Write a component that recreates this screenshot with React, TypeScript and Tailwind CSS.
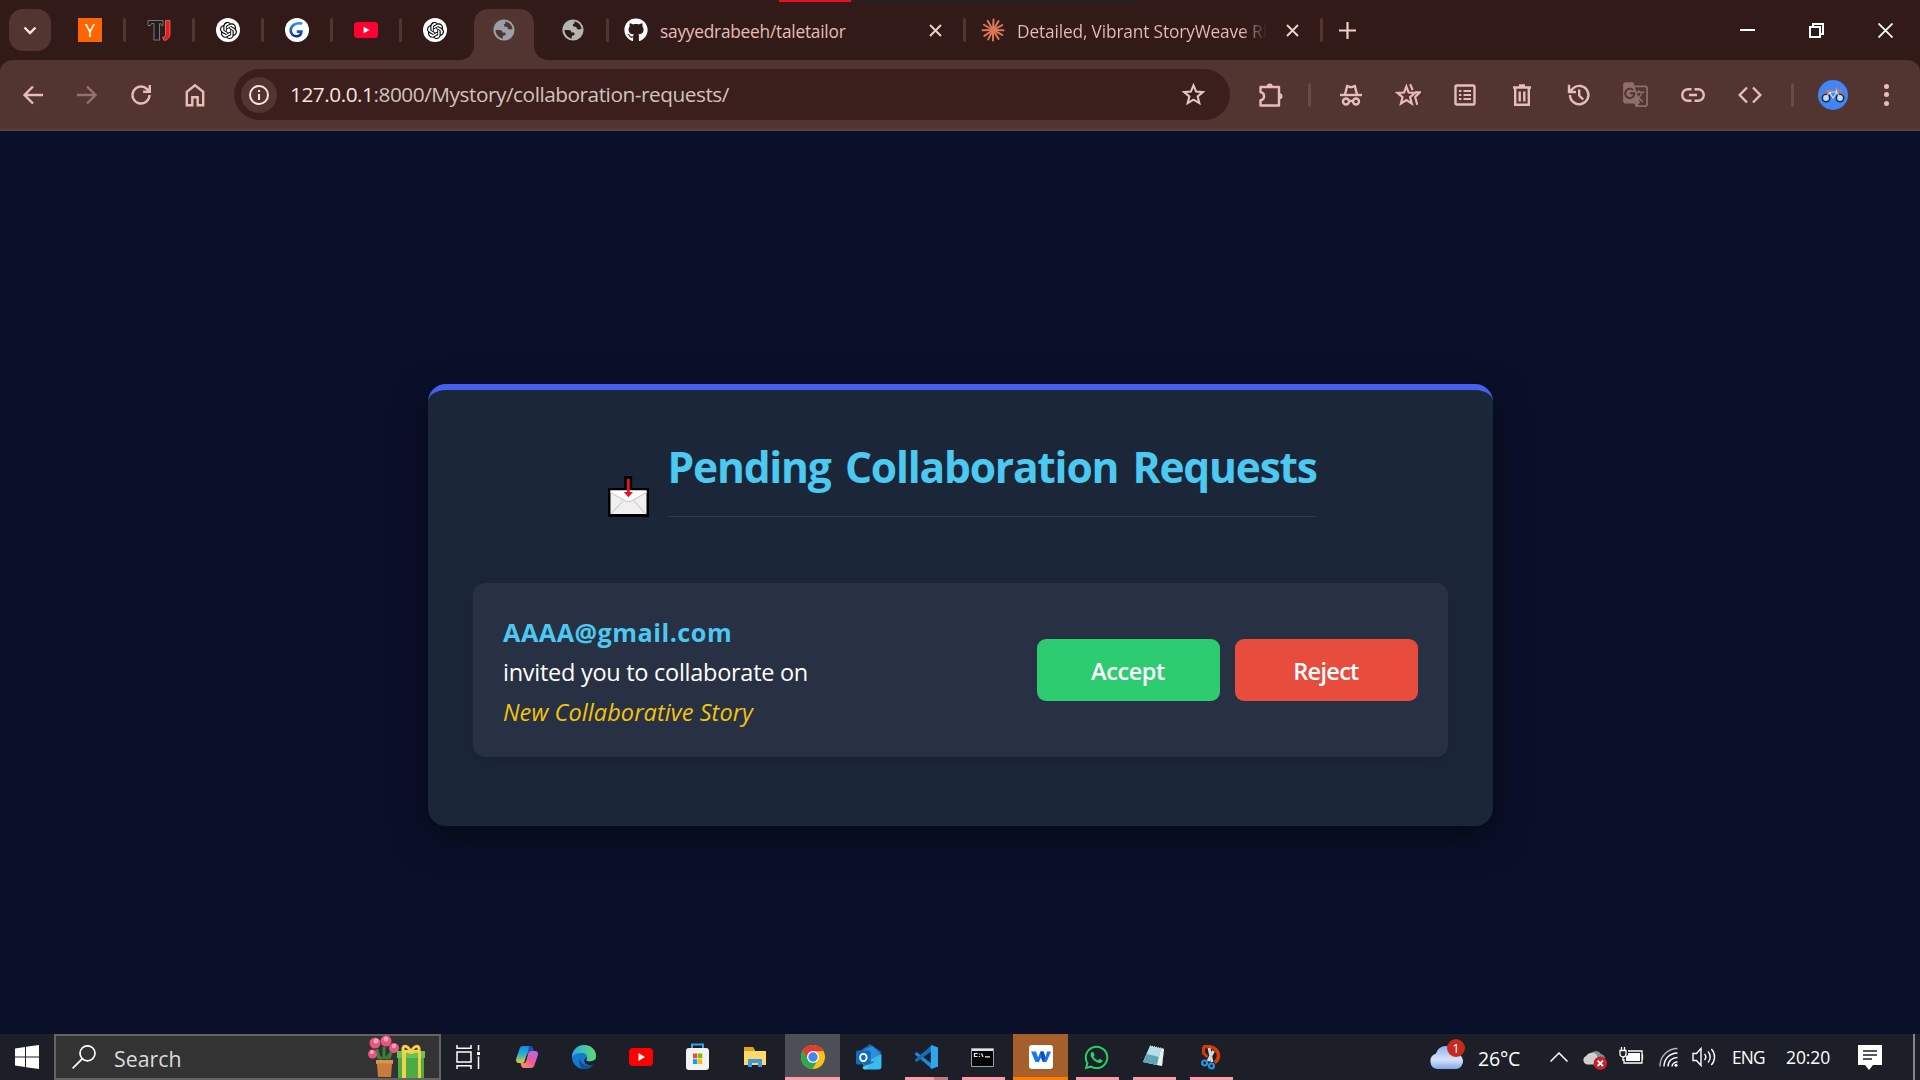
import React from 'react';
import { FaGithub, FaWhatsapp } from 'react-icons/fa';
import { SiOpenai } from 'react-icons/si';
import { MdGTranslate } from 'react-icons/md';

type Kids = { children?: React.ReactNode };

/* ---------- tab strip ---------- */

function Globe({ color, back }: { color: string; back: string }) {
  return (
    <svg width="22" height="22" viewBox="0 0 22 22">
      <circle cx="11" cy="11" r="10.6" fill={color} />
      <path
        fill={back}
        d="M12.2 2.6C16 3 19 6 19.5 9.6c-1.500 1.200-3.400.8-4.200.4-.9-.5-.3-1.800-1.500-2.200-1.600-.4-2.800-.2-3-1.600-.1-1.300 1.500-1.400 1.800-2.200zM2.500 10.900h3.700c2.600 0 3.200 1.300 3.300 2.700h2.200c1.200.2 1.300 2.900-.2 3-.9.200-1.700.1-1.700 1.100v1.700C6 18.800 2.700 15.500 2.500 10.900z"
      />
    </svg>
  );
}

function OpenAiIcon() {
  return (
    <span className="flex h-6 w-6 items-center justify-center rounded-full bg-white text-black">
      <SiOpenai size={17} />
    </span>
  );
}

function YoutubeIcon() {
  return (
    <svg width="24" height="16" viewBox="0 0 24 16">
      <rect width="24" height="16" rx="3.500" fill="#ff0033" />
      <path d="M9.600 4.800 15.600 8l-6 3.200z" fill="#fff" />
    </svg>
  );
}

function TjIcon() {
  return (
    <svg width="24" height="24" viewBox="0 0 24 24">
      <path d="M1 2.500h15v5h-1.500l-1-2h-1v15.500l.5 1H6.500l.5-1V5.500H4.500l-1 2H1z" fill="#1d1d1f" stroke="#858080" strokeWidth=".9" />
      <path d="M18.500 2.500h4.500V16c0 3.500-2.500 6-6 6.500l-.8-1.500-.5-2h1c1 0 1.800-1 1.800-2.500z" fill="#f01818" stroke="#d9a0a0" strokeWidth=".6" />
    </svg>
  );
}

function GIcon() {
  return (
    <svg width="24" height="24" viewBox="0 0 24 24">
      <defs>
        <linearGradient id="gblue" x1="0" y1="0" x2="0" y2="1">
          <stop offset="0" stopColor="#2f8df0" />
          <stop offset="1" stopColor="#0a2fa0" />
        </linearGradient>
      </defs>
      <circle cx="12" cy="12" r="12" fill="#fff" />
      <path d="M17.200 5.600C11 4 5.700 7.500 5.700 12.200c0 3.800 2.800 6 5.800 6 3 0 4.700-1.800 4.900-4.600h-4.600" fill="none" stroke="url(#gblue)" strokeWidth="2.600" />
    </svg>
  );
}

function ClaudeIcon() {
  const rays = [3, 32, 62, 92, 118, 148, 180, 207, 236, 268, 300, 330];
  return (
    <svg width="24" height="24" viewBox="0 0 24 24" stroke="#d97757" strokeWidth="2" strokeLinecap="round">
      {rays.map((a) => (
        <path key={a} d="M12 12V1.500" transform={`rotate(${a} 12 12)`} />
      ))}
    </svg>
  );
}

function Sep({ hidden }: { hidden?: boolean }) {
  return <span className={hidden ? 'h-6 w-[3px]' : 'h-6 w-[3px] rounded-full bg-[#523431]'} />;
}

function PinnedTab({ children, hidden }: Kids & { hidden?: boolean }) {
  return (
    <div className="flex h-full w-[69px] items-center">
      <span className="flex w-[66px] justify-center">{children}</span>
      <Sep hidden={hidden} />
    </div>
  );
}

function CloseX() {
  return (
    <svg width="13" height="13" viewBox="0 0 13 13" stroke="#f0cfc9" strokeWidth="2" fill="none">
      <path d="M1 1 12 12M12 1 1 12" />
    </svg>
  );
}

function TabStrip() {
  return (
    <div className="relative flex h-[60px] items-center bg-[#311a17]">
      <div className="absolute top-0 left-[779px] flex h-[2px] w-[362px] bg-[#262022]">
        <span className="h-full w-[72px] bg-[#e81123]" />
      </div>
      <button className="ml-[9px] flex h-[42px] w-[42px] items-center justify-center rounded-[14px] bg-[#523431]">
        <svg width="14" height="9" viewBox="0 0 14 9" fill="none" stroke="#fbe4df" strokeWidth="2.400">
          <path d="M1.500 1.500 7 7l5.500-5.500" />
        </svg>
      </button>
      <div className="ml-[6px] flex h-full">
        <PinnedTab>
          <span className="flex h-6 w-6 items-center justify-center bg-[#ff6600] text-[18px] leading-none text-white">Y</span>
        </PinnedTab>
        <PinnedTab><TjIcon /></PinnedTab>
        <PinnedTab><OpenAiIcon /></PinnedTab>
        <PinnedTab><GIcon /></PinnedTab>
        <PinnedTab><YoutubeIcon /></PinnedTab>
        <PinnedTab hidden><OpenAiIcon /></PinnedTab>
        <div className="relative flex h-full w-[69px] items-center">
          <svg className="absolute bottom-0 left-[-12px]" width="90" height="51" viewBox="0 0 90 51" fill="#523431">
            <path d="M0 51c9 0 15-6 15-15V15C15 6 21 0 30 0h30c9 0 15 6 15 15v21c0 9 6 15 15 15z" />
          </svg>
          <span className="relative flex w-[66px] justify-center"><Globe color="#9aa0a6" back="#523431" /></span>
        </div>
        <PinnedTab><Globe color="#b4b4b2" back="#311a17" /></PinnedTab>
      </div>
      <div className="flex h-full w-[357px] items-center pl-[15px] text-[17.300px] text-[#e7bdb6]">
        <FaGithub size={24} color="#fff" />
        <span className="ml-3 w-[269px] pt-[3px] tracking-[-0.23px]">sayyedrabeeh/taletailor</span>
        <CloseX />
        <span className="grow" />
        <Sep />
      </div>
      <div className="flex h-full w-[357px] items-center pl-[15px] text-[17.300px] text-[#e7bdb6]">
        <ClaudeIcon />
        <span className="mr-[19px] ml-3 w-[250px] overflow-hidden bg-gradient-to-r from-[#e7bdb6] from-90% to-[#e7bdb6]/0 bg-clip-text pt-[3px] tracking-[-0.14px] whitespace-nowrap text-transparent">
          Detailed, Vibrant StoryWeave RE
        </span>
        <CloseX />
        <span className="grow" />
        <Sep />
      </div>
      <svg className="ml-4" width="17" height="17" viewBox="0 0 17 17" stroke="#f0cfc9" strokeWidth="2.200">
        <path d="M8.500 0v17M0 8.500h17" />
      </svg>
      <div className="ml-auto flex h-full text-white">
        <span className="flex w-[69px] items-center justify-center"><span className="h-[2px] w-[15px] bg-white" /></span>
        <span className="flex w-[69px] items-center justify-center">
          <svg width="15" height="15" viewBox="0 0 15 15" fill="none" stroke="#fff" strokeWidth="2">
            <path d="M1 4h10v10H1zM4 4V1h10v10h-3" />
          </svg>
        </span>
        <span className="flex w-[69px] items-center justify-center">
          <svg width="15" height="15" viewBox="0 0 15 15" stroke="#fff" strokeWidth="1.800">
            <path d="m.5.5 14 14M14.500.5l-14 14" />
          </svg>
        </span>
      </div>
    </div>
  );
}

/* ---------- toolbar ---------- */

function Line({ d, size = 24, fade, children }: { d?: string; size?: number; fade?: boolean } & Kids) {
  return (
    <svg
      className={fade ? 'opacity-45' : ''}
      width={size}
      height={size}
      viewBox="0 0 24 24"
      fill="none"
      stroke="#e7bdb6"
      strokeWidth="2.400"
    >
      {d && <path d={d} />}
      {children}
    </svg>
  );
}

const slot = 'flex h-full w-[54px] items-center justify-center';
const ext = 'flex h-full w-[57px] items-center justify-center';

function Bike() {
  return (
    <svg width="30" height="30" viewBox="0 0 30 30">
      <circle cx="15" cy="15" r="15" fill="#4285f4" />
      <g fill="#b9dcff" stroke="#1d2b3f" strokeWidth="1.600">
        <circle cx="8" cy="18" r="3.700" />
        <circle cx="22" cy="18" r="3.700" />
      </g>
      <path d="m8 18 3.500-6h7.500l3 6M11.500 12l3.500 6 4-6-1-2.500" fill="none" stroke="#d5dce4" strokeWidth="1.200" />
      <path d="M8.500 10.800h4.500M17 8.500h2.500M20.500 10.800h3" stroke="#f4703a" strokeWidth="1.800" />
      <path d="M4 15.500a4.600 4.600 0 0 1 6.500-1.600M19.500 13.900a4.600 4.600 0 0 1 6.500 1.600" fill="none" stroke="#d9603a" strokeWidth="1" />
    </svg>
  );
}

function Toolbar() {
  return (
    <div className="bg-[#311a17]">
      <div className="flex h-[71px] items-center rounded-t-[12px] border-b-2 border-[#5b3f3a] bg-[#523431] pl-[6px]">
        <span className={slot}><Line d="M22 12H4M12 3.500 3.500 12l8.500 8.500" /></span>
        <span className={slot}><Line fade d="M2 12h18M12 3.500l8.500 8.500-8.500 8.500" /></span>
        <span className={slot}><Line d="M20.500 12a8.500 8.500 0 1 1-2.600-6.100L20.500 8.500M20.800 2v6.700h-6.700" /></span>
        <span className={slot}><Line d="M3.800 22.300V8.800L12 2.200l8.200 6.600v13.500h-5.500v-8H9.300v8z" /></span>
        <div className="ml-3 flex h-[51px] w-[996px] items-center rounded-full bg-[#3a1f1c] pr-[24px] pl-[7px]">
          <span className="flex h-9 w-9 items-center justify-center rounded-full bg-[#523431]">
            <svg width="20" height="20" viewBox="0 0 20 20" fill="none" stroke="#fbe4df" strokeWidth="2">
              <circle cx="10" cy="10" r="9" />
              <path d="M10 9v6M10 5v2" />
            </svg>
          </span>
          <span className="ml-[13px] text-[20.800px] tracking-[-0.47px] text-[#d3c2bf]">
            <span className="text-[#f7e4e0]">127.0.0.1</span>:8000/Mystory/collaboration-requests/
          </span>
          <svg className="ml-auto" width="25" height="25" viewBox="0 0 24 24" fill="none" stroke="#dccac6" strokeWidth="2">
            <path d="m12 3.200 2.500 6 6.500.5-5 4.200 1.600 6.400L12 16.900l-5.600 3.400L8 13.900 3 9.700l6.500-.5z" />
          </svg>
        </div>
        <span className="ml-[14px] flex w-[54px] justify-center">
          <svg width="26" height="26" viewBox="0 0 26 26" fill="none" stroke="#e7bdb6" strokeWidth="2.400" strokeLinejoin="round">
            <path d="M2.500 5H21v18.500H2.500v-5.200c4.800-.8 4.800-7.400 0-8.200z" />
            <path d="M8.700 4.500a3 3 0 0 1 6 0zM21.500 11.300a3 3 0 0 1 0 6z" fill="#e7bdb6" stroke="none" />
          </svg>
        </span>
        <span className="ml-[10px] h-6 w-[3px] rounded-full bg-[#6e4a46]" />
        <div className="ml-[11px] flex h-full">
          <span className={ext}>
            <Line>
              <path d="M1 12h22" />
              <path d="M6 11.500 8.200 3l3.800 1.300L15.800 3 18 11.500" />
              <circle cx="7" cy="18.500" r="3" />
              <circle cx="17" cy="18.500" r="3" />
              <path d="M9.800 18h4.400" />
            </Line>
          </span>
          <span className={ext}>
            <Line size={26}>
              <path strokeWidth="2" d="m10.500 4.200 2.100 5.500 5.900.4-4.600 3.800 1.600 6-5-3.300-5 3.300 1.500-6L2.400 10.100l6-.4zM14 2l2.300 5.500M18.500 9.500H23l-4.400 4.300L20.500 21" />
            </Line>
          </span>
          <span className={ext}>
            <Line>
              <rect x="2.500" y="2.500" width="19" height="19" rx="1.500" />
              <path d="M6 8h2.400M6 12h2.400M6 16h2.400M10.500 8H18M10.500 12H18M10.500 16H18" strokeWidth="2" />
            </Line>
          </span>
          <span className={ext}>
            <Line d="M3 4.500h18M9 2.500h6M5.200 5v16.800h13.600V5M9.700 8.500v10M14.300 8.500v10" />
          </span>
          <span className={ext}>
            <Line d="M3 12a9.200 9.200 0 1 0 3-6.700L2.500 8.700M2 1.800v7.200h7M12.200 6.500v6l4 4" />
          </span>
          <span className={`${ext} text-[#8f6e6a]`}><MdGTranslate size={27} /></span>
          <span className={ext}>
            <Line d="M10.500 6.200H7a5.800 5.800 0 0 0 0 11.600h3.500M13.500 6.200H17a5.800 5.800 0 0 1 0 11.600h-3.500M8 12h8" />
          </span>
          <span className={ext}><Line d="m9 4.500-7.300 7.500L9 19.500M15 4.500l7.300 7.500-7.300 7.500" /></span>
        </div>
        <span className="ml-[13px] h-6 w-[3px] rounded-full bg-[#6e4a46]" />
        <span className="ml-[24px]"><Bike /></span>
        <span className="ml-[36px] flex h-[22px] flex-col justify-between">
          <i className="h-[5px] w-[5px] rounded-full bg-[#e7bdb6]" />
          <i className="h-[5px] w-[5px] rounded-full bg-[#e7bdb6]" />
          <i className="h-[5px] w-[5px] rounded-full bg-[#e7bdb6]" />
        </span>
      </div>
    </div>
  );
}

/* ---------- page ---------- */

function Envelope() {
  return (
    <svg width="41" height="41" viewBox="0 0 41 41">
      <path d="M16.200 0h8v12H41v29H0V12h16.200z" fill="#000" />
      <path d="M2.500 14.500h36V38h-36z" fill="#f0f0f0" />
      <path d="M2.500 14.500h36v2L20.500 26 2.500 16.500z" fill="#fff" />
      <path d="m2.500 16.500 15 8.500q3 1.600 6 0l15-8.500M3 38l12-13M38 38 26 25" fill="none" stroke="#ccc" strokeWidth="1.100" />
      <path d="M19 3h2.800v13H25l-4.600 5.200-4.600-5.200H19z" fill="#e81224" />
    </svg>
  );
}

function RequestsPage() {
  return (
    <main className="flex grow items-start bg-[#0a102a] pt-[253px]">
      <section className="ml-[428px] h-[442px] w-[1065px] rounded-[18px] border-t-[6px] border-[#4361ee] bg-[#1b2739] px-[45px] shadow-[0_12px_36px_rgba(0,0,0,0.5)]">
        <div className="flex items-end justify-center pt-[44px] pl-[2px]">
          <span className="mr-[19px]"><Envelope /></span>
          <h1 className="h-[83px] w-[648px] border-b border-[#303b4b] text-[42.500px] leading-[65px] font-bold tracking-[-1.2px] [word-spacing:4.500px] whitespace-nowrap text-[#4cc9f0]">
            Pending Collaboration Requests
          </h1>
        </div>
        <article className="mt-[66px] flex h-[174px] items-center justify-between rounded-[12px] bg-[#283043] px-[30px] shadow-[0_6px_18px_rgba(0,0,0,0.15)]">
          <div className="flex flex-col pt-[4px] text-[23.500px] leading-[40px] text-white">
            <strong className="text-[25.200px] tracking-[0.5px] text-[#4cc9f0]">AAAA@gmail.com</strong>
            <span className="tracking-[-0.27px]">invited you to collaborate on</span>
            <em className="tracking-[0.09px] text-[#f1c40f]">New Collaborative Story</em>
          </div>
          <div className="flex gap-[15px] text-[23.500px] font-semibold text-white">
            <button className="h-[62px] w-[183px] rounded-[9px] bg-[#2ecc71] pt-[3px] pr-[1px] tracking-[-0.4px]">Accept</button>
            <button className="h-[62px] w-[183px] rounded-[9px] bg-[#e74c3c] pt-[3px] pr-[1px] tracking-[-0.7px]">Reject</button>
          </div>
        </article>
      </section>
    </main>
  );
}

/* ---------- taskbar ---------- */

function Gifts() {
  return (
    <svg width="57" height="44" viewBox="0 0 57 44">
      <path d="M16 24V12M14 24 6 18M18 24l8-10M11 24 9 14M21 24l2-6" stroke="#3f7d3a" strokeWidth="3" />
      <g fill="#e8557f">
        <circle cx="7" cy="8" r="5.500" /><circle cx="18" cy="6" r="5.500" /><circle cx="26" cy="13" r="5" /><circle cx="4.500" cy="19" r="4.500" />
      </g>
      <g fill="#f8a3b8">
        <circle cx="8" cy="6" r="2.500" /><circle cx="18" cy="4" r="2.500" /><circle cx="26" cy="11" r="2.200" /><circle cx="4" cy="17" r="2" />
      </g>
      <path d="M8 25h17v4h-1l-1 13H10L9 29H8z" fill="#c97b3c" />
      <path d="M8 25h17v3.500H8z" fill="#dd9452" />
      <path d="M30 19h26v24H30z" fill="#4bab45" />
      <path d="M29 16h28v7H29z" fill="#66c255" />
      <path d="M34 16h4v27h-4zM50 16h3v27h-3z" fill="#f3cf4b" />
      <path d="M43 17c-4-8-9-7-8-1zM43 17c4-8 9-7 8-1z" fill="none" stroke="#f6d24a" strokeWidth="3" />
    </svg>
  );
}

function App24({ children, size = 24 }: Kids & { size?: number }) {
  return <svg width={size} height={size} viewBox="0 0 24 24">{children}</svg>;
}

function Task({ children, mark }: Kids & { mark?: 'on' | 'vs' | 'chrome' | 'orange' }) {
  const tile =
    mark === 'chrome'
      ? 'relative ml-[2px] flex h-full w-[55px] items-center justify-center bg-[#4c4f56]'
      : mark === 'orange'
        ? 'relative ml-[2px] flex h-full w-[55px] items-center justify-center bg-[#a55f2b]'
        : 'relative flex h-full w-[57px] items-center justify-center';
  return (
    <div className={tile}>
      {children}
      {mark === 'on' && <span className="absolute bottom-0 left-[8px] h-[3px] w-[43px] bg-[#ff9aa6]" />}
      {mark === 'vs' && (
        <span className="absolute bottom-0 left-[8px] flex h-[3px] w-[43px] bg-[#c27982]"><i className="w-[29px] bg-[#ff9aa6]" /></span>
      )}
      {mark === 'chrome' && <span className="absolute bottom-0 h-[3px] w-full bg-[#ff9aa6]" />}
      {mark === 'orange' && <span className="absolute bottom-0 h-[3px] w-full bg-[#ff7a00]" />}
    </div>
  );
}

function Taskbar() {
  return (
    <footer className="flex h-[46px] items-center bg-[#1c1f28] text-white">
      <span className="flex w-[54px] justify-center">
        <svg width="24" height="24" viewBox="0 0 24 24" fill="#fff">
          <path d="M0 3.400 10 2v9.500H0zM11 1.800 24 0v11.500H11zM0 12.500h10V22L0 20.600zM11 12.500h13V24l-13-1.800z" />
        </svg>
      </span>
      <div className="flex h-full w-[387px] items-center border-2 border-[#646464] bg-[#333333] pr-[14px] pl-4">
        <svg width="24" height="24" viewBox="0 0 24 24" fill="none" stroke="#fff" strokeWidth="1.700">
          <circle cx="15.500" cy="8.300" r="7.500" />
          <path d="M10.200 13.800.6 23.400" />
        </svg>
        <span className="ml-[18px] pt-[4px] text-[21.300px] text-[#dcdcdc]">Search</span>
        <span className="ml-auto"><Gifts /></span>
      </div>
      <Task>
        <svg className="mr-[3px]" width="25" height="24" viewBox="0 0 25 24" fill="none" stroke="#fff" strokeWidth="1.500">
          <path d="M1 0v3.300h14V0M1 7h14v10H1zM1 24v-3.300h14V24M22.500 0v5.500M22.500 11.500V24" />
          <path d="M21 7h3v3h-3z" fill="#fff" stroke="none" />
        </svg>
      </Task>
      <Task>
        <App24>
          <defs>
            <linearGradient id="cpa" x1="0" y1="0" x2="0" y2="1"><stop offset="0" stopColor="#1a86e8" /><stop offset=".5" stopColor="#29b3c9" /><stop offset="1" stopColor="#e8c92e" /></linearGradient>
            <linearGradient id="cpb" x1="1" y1="0" x2="0" y2="1"><stop offset="0" stopColor="#a66bf5" /><stop offset=".5" stopColor="#ee5a9a" /><stop offset="1" stopColor="#ff9b50" /></linearGradient>
          </defs>
          <path d="M8 1h7c2 0 2.500 1.500 3 3l.6 2h-3c-2 0-2.800 1-3.300 3l-1.500 6c-.6 2-1.500 3-3.500 3H4c-2.500 0-3.500-2-2.800-4.500L4.500 4C5 2 6 1 8 1z" fill="url(#cpa)" />
          <path d="M16 23H9c-2 0-2.500-1.500-3-3l-.4-2h2.500c2 0 2.800-1 3.300-3l1.500-6c.6-2 1.500-3 3.500-3H20c2.500 0 3.500 2 2.800 4.500L19.500 20c-.5 2-1.500 3-3.500 3z" fill="url(#cpb)" />
          <path d="M8 18c2 0 2.800-1 3.300-3l1.500-6-1.600 2-1.500 5c-.4 1.300-1 2-2 2z" fill="#1c1f28" />
          <path d="M14 1h1c2 0 2.500 1.500 3 3l.6 2h-3c-1 0-2 .4-2.500 1z" fill="#1a4fc4" />
        </App24>
      </Task>
      <Task>
        <App24>
          <defs>
            <linearGradient id="eda" x1="0" y1="0" x2="1" y2="0"><stop offset="0" stopColor="#2ba8e8" /><stop offset="1" stopColor="#5fdc6a" /></linearGradient>
          </defs>
          <circle cx="12" cy="12" r="12" fill="#1479d0" />
          <path d="M0 11C1 4.500 6 0 12 0c7 0 12 5 12 10.500 0 4-3 6-6.500 6-3 0-3.800-1.500-3-2.500 1.500-2 .5-6-4-6C6 8 2 8.500 0 13z" fill="url(#eda)" />
          <path d="M8 13c0 6 6 9 13.500 6.500C19 23 15 24.500 11 24 7 22 6.500 16 8 13z" fill="#114f96" />
          <path d="M14.500 14c-.8 1 0 2.500 3 2.500 2.500 0 4.500-.9 5.700-2.200l2 3.200-3.800 2.200c-5 1.700-10.500-1.300-8.700-5.200 1.200-2.500 3.300-2.500 1.800-.5z" fill="#1c1f28" />
        </App24>
      </Task>
      <Task>
        <svg width="24" height="20" viewBox="0 0 24 20"><rect y="1" width="24" height="18" rx="4" fill="#f00" /><path d="m9.500 6 6.500 4-6.500 4z" fill="#fff" /></svg>
      </Task>
      <Task>
        <svg width="23" height="28" viewBox="0 0 23 28">
          <path d="M6 7V1.500h11V7" fill="none" stroke="#31a8e8" strokeWidth="2" />
          <rect y="5" width="23" height="22" rx="3" fill="#f2f2f2" />
          <path d="M7 10.500h4.300v4.800H7z" fill="#f25022" /><path d="M12 10.500h4.300v4.800H12z" fill="#7fba00" />
          <path d="M7 16.200h4.300V21H7z" fill="#00a4ef" /><path d="M12 16.200h4.300V21H12z" fill="#ffb900" />
        </svg>
      </Task>
      <Task>
        <svg width="24" height="20" viewBox="0 0 24 20">
          <path d="M1 0h9l2 3v4H1z" fill="#e0a21b" />
          <path d="M1 4h22v14H1z" fill="#ffd869" />
          <path d="M5 20v-8h14v8h-4v-4H9v4z" fill="#3b97e3" />
        </svg>
      </Task>
      <Task mark="chrome">
        <App24>
          <circle cx="12" cy="12" r="12" fill="#fbc116" />
          <path d="M1.600 6A12 12 0 0 1 22.400 6L12 6.500 7 15z" fill="#e33b2e" />
          <path d="M1.600 6A12 12 0 0 0 11.500 24L17 15l-9.500 0z" fill="#2da94f" />
          <circle cx="12" cy="12" r="6" fill="#fff" /><circle cx="12" cy="12" r="4.700" fill="#4285f4" />
        </App24>
      </Task>
      <Task>
        <App24 size={26}>
          <path d="m13 0 10 7v6H4V6z" fill="#1a5fb4" />
          <path d="m7 5 8-3 7 6v8H7z" fill="#2d8fdc" />
          <path d="M23.500 9v12c0 1.500-1 2.500-2.500 2.500H8c-1 0-2-.8-2-2l9-4z" fill="#36bdf2" />
          <path d="m23.500 9-17 9.500V22c0 1 .8 1.500 2 1.500z" fill="#7ad8fa" opacity=".5" />
          <rect x="0" y="6" width="13.500" height="13" rx="1.500" fill="#0f6cbd" />
          <ellipse cx="6.800" cy="12.500" rx="3" ry="3.400" fill="none" stroke="#fff" strokeWidth="1.800" />
        </App24>
      </Task>
      <Task mark="vs">
        <App24>
          <path d="M1 8.200 2.600 7 18 19v5L1.200 9.700z" fill="#1f8ad2" />
          <path d="M1 15.800 2.600 17 18 6V0L1.200 14.300z" fill="#0f6fb5" />
          <path d="m17.500 0 6.500 2.500v19L17.500 24c-.5-.5-.7-1-.7-2V2c0-1 .2-1.500.7-2z" fill="#2fa5ee" />
        </App24>
      </Task>
      <Task mark="on">
        <svg width="23" height="19" viewBox="0 0 23 19">
          <path d="M.5.500h22v18H.5z" fill="#050505" stroke="#9aa3aa" />
          <path d="M1 1h21v2H1z" fill="#dfe4e8" />
          <path d="M6.500 5.500h-3v3h3M8.500 5.500v1M8.500 8v1M10.500 5.500l1.500 3.500M14 8.800h5" fill="none" stroke="#eee" strokeWidth="1.200" />
        </svg>
      </Task>
      <Task mark="orange">
        <svg width="24" height="24" viewBox="0 0 24 24">
          <rect width="24" height="24" rx="3" fill="#fff" />
          <path d="M2 6.500h5l2 6 2.500-6h3l2 6 1.500-6h4L17.500 17H14l-2-4.500L10 17H6.500z" fill="#1878e8" />
          <path d="m11.500 6.500 3 0 2 5.500-2 5H14l-2-4.500z" fill="#0b4fc0" />
        </svg>
      </Task>
      <Task mark="on"><FaWhatsapp size={27} color="#25d366" /></Task>
      <Task mark="on">
        <App24>
          <path d="M8 1 22 4l-2 17L1 17z" fill="#5d9fb0" />
          <path d="M8 1 19 3.500 15 20 1 17z" fill="#b4dfe6" />
          <path d="m5 9-4 8 14 3 2-8z" fill="#5fa6b5" />
          <path d="m19 3.500 3 .5-2 17-5-1z" fill="#e9eef0" />
          <path d="m8 1 14 3" stroke="#ddd" strokeWidth="1.500" strokeDasharray="1 1" />
        </App24>
      </Task>
      <Task mark="on">
        <svg width="20" height="25" viewBox="0 0 20 25">
          <path d="M2 2c8-2 15.500 2 15.500 9 0 3-1.500 5-4 6.500" fill="none" stroke="#d83b01" strokeWidth="3.500" />
          <path d="M2.500 2v6l4 4" fill="none" stroke="#d83b01" strokeWidth="3" />
          <path d="m8 3 3 14M12.500 6 7 16" stroke="#d5d9dd" strokeWidth="2.800" />
          <circle cx="3.600" cy="18" r="2.500" fill="none" stroke="#2196e3" strokeWidth="2.200" />
          <circle cx="10.500" cy="21" r="2.500" fill="none" stroke="#2196e3" strokeWidth="2.200" />
        </svg>
      </Task>

      <div className="ml-auto flex h-full items-center">
        <div className="relative w-[36px]">
          <svg width="36" height="24" viewBox="0 0 36 24">
            <defs><linearGradient id="cloud" x1="0" y1="0" x2="0" y2="1"><stop offset="0" stopColor="#8fb4ee" /><stop offset=".6" stopColor="#d5e3fb" /><stop offset="1" stopColor="#7fa6e8" /></linearGradient></defs>
            <path d="M8 24a8 8 0 0 1-1-15.500A10.500 10.500 0 0 1 27 8.300 8 8 0 0 1 28 24z" fill="url(#cloud)" />
          </svg>
          <span className="absolute -top-[6px] left-[18px] flex h-[18px] w-[18px] items-center justify-center rounded-full bg-[#c42b1c] text-[13px] leading-none">1</span>
        </div>
        <span className="ml-[13px] w-[43px] pt-[3px] text-[19.500px] tracking-[-0.2px]">26°C</span>
        <svg className="ml-[29px]" width="18" height="10" viewBox="0 0 18 10" fill="none" stroke="#fff" strokeWidth="1.500"><path d="m.5 9.500 8.500-8.500 8.500 8.500" /></svg>
        <svg className="ml-[15px] mt-[4px]" width="24" height="21" viewBox="0 0 24 21">
          <path d="M7 7a6 6 0 0 1 11-2 5 5 0 0 1 2 9H9z" fill="#8b8b8b" />
          <path d="M4 15.500A4.500 4.500 0 0 1 3 7a7 7 0 0 1 11-1l2 9.500z" fill="#d0d0d0" />
          <circle cx="17.300" cy="14.300" r="6.700" fill="#c9202b" />
          <path d="m14.600 11.600 5.400 5.400M20 11.600 14.600 17" stroke="#fff" strokeWidth="1.800" />
        </svg>
        <svg className="ml-[12px] -mt-[2px]" width="25" height="18" viewBox="0 0 25 18" fill="none" stroke="#fff" strokeWidth="1.300">
          <path d="M9 4h14v12H5v-4M23.500 7.500v5M1 3.500h6v3.500a3 3 0 0 1-6 0zM2.500 0v3.500M5.500 0v3.500M4 10v4" />
          <path d="M9 6h12v8H7V9.500L9 8z" fill="#fff" stroke="none" />
        </svg>
        <svg className="ml-[15px]" width="20" height="20" viewBox="0 0 20 20" fill="none" stroke="#fff" strokeWidth="1.400">
          <path d="M1 19.500C1 9 9 1.500 18.500 1.500" opacity=".65" />
          <path d="M5 19.500C5 11.500 11 6 18.500 6M9 19.500C9 14 13 10.500 18.500 10.500M13 19.500c0-2.500 2.500-4.500 5.500-4.500" />
          <circle cx="17" cy="18.200" r="1.500" fill="#fff" stroke="none" />
        </svg>
        <svg className="ml-[13px]" width="24" height="20" viewBox="0 0 24 20" fill="none" stroke="#fff" strokeWidth="1.400">
          <path d="M1 6.500h3.500L9 1.500v17l-4.500-5H1z" />
          <path d="M12.500 7a4.500 4.500 0 0 1 0 6M16 4.500a8 8 0 0 1 0 11M19.300 2a11.500 11.500 0 0 1 0 16" />
        </svg>
        <span className="ml-[16px] w-[33px] pt-[1px] text-[17.300px] tracking-[-0.75px]">ENG</span>
        <span className="ml-[21px] w-[45px] pt-[1px] text-[17.500px] tracking-[-0.1px]">20:20</span>
        <svg className="ml-[27px]" width="24" height="25" viewBox="0 0 24 25">
          <path d="M0 0h24v20H15l-4 5-4-5H0z" fill="#fff" />
          <path d="M5 6h14M5 10h14M5 14h9" stroke="#1c1f28" strokeWidth="1.300" />
        </svg>
        <span className="mr-[5px] ml-[31px] h-full w-[2px] bg-[#84868a]" />
      </div>
    </footer>
  );
}

export default function App() {
  return (
    <div className="flex h-[1080px] w-[1920px] flex-col overflow-hidden font-['Open_Sans','Noto_Sans',sans-serif]">
      <TabStrip />
      <Toolbar />
      <RequestsPage />
      <Taskbar />
    </div>
  );
}
